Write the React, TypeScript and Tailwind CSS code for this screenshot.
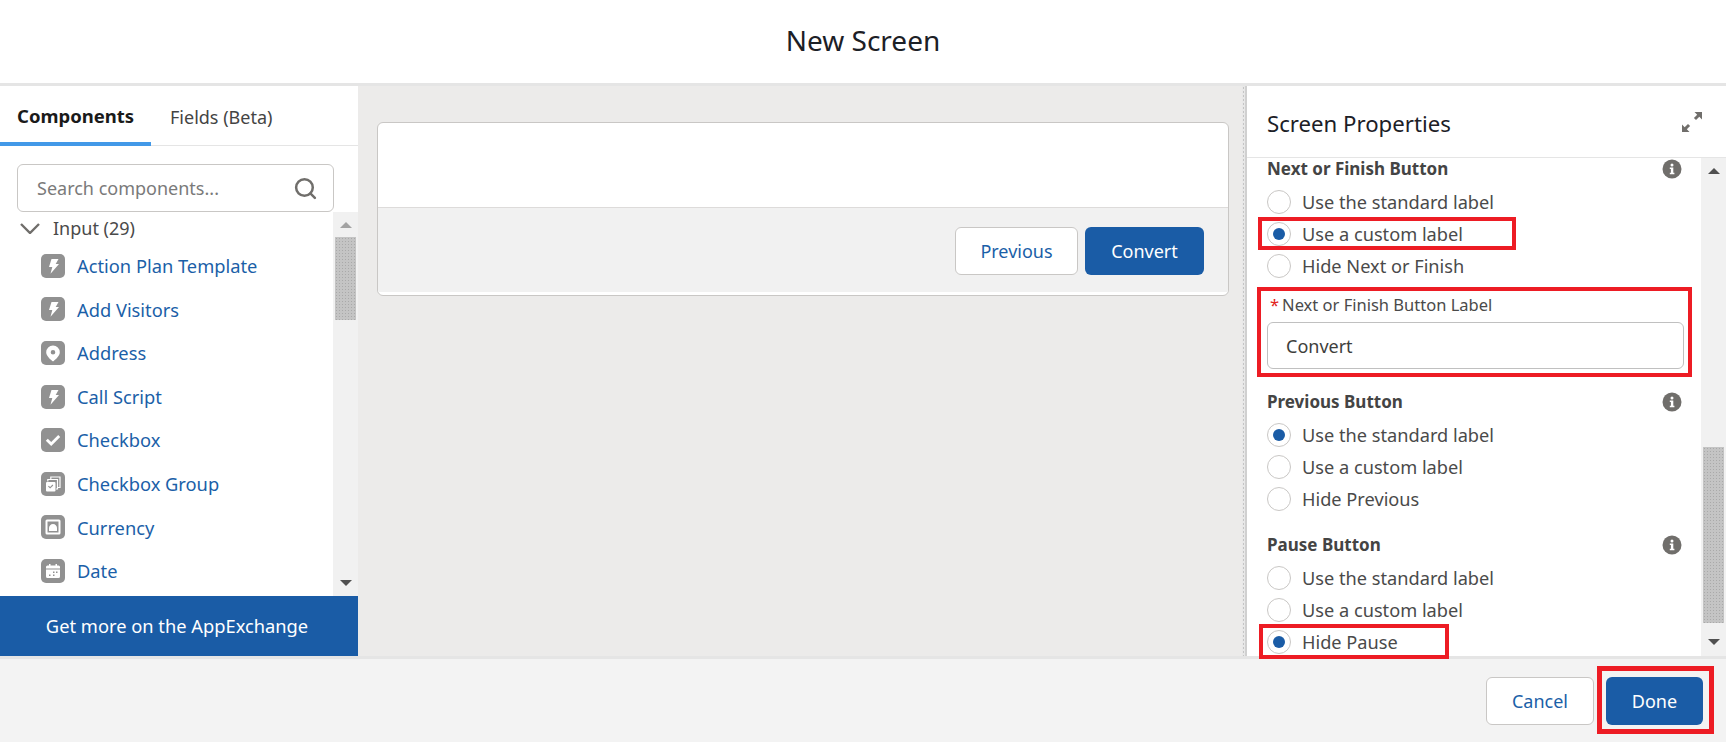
import { Search } from 'lucide-react'

const font = 'font-["Noto_Sans",sans-serif]'

const components = [
  { name: 'Action Plan Template', icon: 'bolt' },
  { name: 'Add Visitors', icon: 'bolt' },
  { name: 'Address', icon: 'pin' },
  { name: 'Call Script', icon: 'bolt' },
  { name: 'Checkbox', icon: 'check' },
  { name: 'Checkbox Group', icon: 'group' },
  { name: 'Currency', icon: 'currency' },
  { name: 'Date', icon: 'date' },
]

function ComponentIcon({ kind }: { kind: string }) {
  return (
    <span className="w-6 h-6 rounded-[5px] bg-[#919191] shrink-0 flex items-center justify-center">
      <svg viewBox="0 0 24 24" className="w-6 h-6" fill="#fff">
        {kind === 'bolt' && <path d="M10.500 5h7l-2.800 5h3.300L9.500 19.800l1.800-6.800H8z" />}
        {kind === 'pin' && (
          <path
            fillRule="evenodd"
            d="M12 4.500a6.800 6.800 0 0 0-6.800 6.800c0 3.800 4.600 7.500 6 8.600a1.300 1.300 0 0 0 1.600 0c1.400-1.100 6-4.800 6-8.600A6.800 6.800 0 0 0 12 4.500zm0 9a2.300 2.300 0 1 1 0-4.600 2.300 2.300 0 0 1 0 4.600z"
          />
        )}
        {kind === 'check' && <path d="M4.800 12.700l2-2 3.400 3.400 7-7 2 2-9 9z" />}
        {kind === 'group' && (
          <>
            <path fill="none" stroke="#fff" strokeWidth="1.200" d="M9.800 7V5h9.200v10.500h-2" />
            <path fill="none" stroke="#fff" strokeWidth="1.200" d="M6.800 9.500V7.500h9.700v9.500H15" />
            <rect x="5" y="10" width="9.500" height="9.500" rx="1" />
            <path d="M7 14.500l.8-.8 1.300 1.300 2.400-2.400.8.8-3.200 3.200z" fill="#919191" />
          </>
        )}
        {kind === 'currency' && (
          <>
            <path
              fillRule="evenodd"
              d="M4.500 6A1.500 1.500 0 0 1 6 4.500h12A1.500 1.500 0 0 1 19.500 6v12a1.500 1.500 0 0 1-1.500 1.500H6A1.500 1.500 0 0 1 4.500 18zm2 .5v11h11v-11z"
            />
            <path d="M8 16v-3c0-2.200 1.800-4 4-4s4 1.800 4 4v3z" />
          </>
        )}
        {kind === 'date' && (
          <>
            <path d="M8 5h1.500v1.500h5V5H16v1.500h1.500A1.500 1.500 0 0 1 19 8v1.500H5V8a1.500 1.500 0 0 1 1.500-1.500H8z" />
            <path
              fillRule="evenodd"
              d="M5 10.500h14v7a1.500 1.500 0 0 1-1.500 1.500h-11A1.500 1.500 0 0 1 5 17.500zm7 2v1.500h1.500v-1.500zm3 0v1.500h1.500v-1.500zm-7 3v1.500h1.500v-1.500zm4 0v1.500h1.500v-1.500z"
            />
          </>
        )}
      </svg>
    </span>
  )
}

function InfoIcon() {
  return (
    <svg viewBox="0 0 20 20" className="w-5 h-5 shrink-0">
      <circle cx="10" cy="10" r="9.500" fill="#706e6b" />
      <circle cx="10" cy="6" r="1.500" fill="#fff" />
      <path d="M7.800 8.600h3.500v5.200h1.100v1.400H7.800v-1.400h1.100V10H7.800z" fill="#fff" />
    </svg>
  )
}

function ExpandIcon() {
  return (
    <svg viewBox="0 0 20 20" className="w-5 h-5">
      <path
        fill="#706e6b"
        d="M12.500 0H20v7.500l-2.700-2.700-3.300 3.300-2.100-2.100 3.300-3.300zM0 12.500V20h7.500l-2.700-2.700 3.300-3.300-2.100-2.100-3.300 3.300z"
      />
    </svg>
  )
}

function Scrollbar({ before, thumb, after, upColor }: { before: string; thumb: string; after: string; upColor: string }) {
  return (
    <div className="bg-[#f1f1f1] flex flex-col items-center shrink-0 w-[25px]">
      <div className={`${before} w-full flex justify-center pt-[10px]`}>
        <svg viewBox="0 0 12 6" className="w-3 h-[6px]">
          <path d="M6 0l6 6H0z" fill={upColor} />
        </svg>
      </div>
      <div
        className={`${thumb} w-[21px] bg-[#c4c4c4] bg-[radial-gradient(#a9a9a9_0.6px,transparent_0.6px)] bg-[length:3px_3px]`}
      />
      <div className={`${after} w-full flex justify-center`}>
        <svg viewBox="0 0 12 6" className="w-3 h-[6px]">
          <path d="M6 6l6-6H0z" fill="#505050" />
        </svg>
      </div>
    </div>
  )
}

function RedBox({ className }: { className: string }) {
  return <div className={`absolute border-[#ed1c24] pointer-events-none ${className}`} />
}

function Radio({ label, checked, children }: { label: string; checked?: boolean; children?: React.ReactNode }) {
  return (
    <div className="relative h-8 flex items-center gap-[11px]">
      <span className="w-6 h-6 rounded-full border border-[#c9c7c5] bg-white flex items-center justify-center shrink-0">
        {checked && <span className="w-3 h-3 rounded-full bg-[#1a5ca6]" />}
      </span>
      <span className="text-[18.2px] text-[#4a4a4a] pt-px">{label}</span>
      {children}
    </div>
  )
}

function SectionHeading({ title }: { title: string }) {
  return (
    <div className="flex items-center justify-between h-5 pr-[2px]">
      <span className="text-[17px] font-bold text-[#444]">{title}</span>
      <InfoIcon />
    </div>
  )
}

export default function App() {
  return (
    <div className={`${font} w-[1726px] h-[742px] flex flex-col bg-white overflow-hidden`}>
      <header className="h-[86px] shrink-0 border-b-[3px] border-[#e5e5e5] flex items-center justify-center pb-1">
        <h1 className="text-[28px] text-[#1c2026]">New Screen</h1>
      </header>

      <div className="h-[570px] flex shrink-0">
        <aside className="w-[358px] shrink-0 flex flex-col bg-white">
          <div className="h-[60px] shrink-0 flex border-b border-[#e5e5e5]">
            <div className="w-[151px] -mb-px h-[60px] border-b-4 border-[#4299e8] flex items-center pl-[17px] pt-1">
              <span className="text-[18.5px] font-bold text-[#1a1a1a]">Components</span>
            </div>
            <div className="flex items-center pl-[19px] pt-1">
              <span className="text-[18px] text-[#444]">Fields (Beta)</span>
            </div>
          </div>

          <div className="h-[66px] shrink-0 pt-[18px] pl-[17px]">
            <div className="w-[317px] h-12 border border-[#c9c7c5] rounded-md flex items-center justify-between pl-[19px] pr-[15px]">
              <span className="text-[18px] text-[#7a7a7a]">Search components...</span>
              <Search className="w-[25px] h-[25px] text-[#706e6b]" strokeWidth={2.4} />
            </div>
          </div>

          <div className="h-[384px] shrink-0 flex">
            <div className="flex-1 overflow-hidden">
              <div className="h-8 flex items-center pl-5 gap-[13px]">
                <svg viewBox="0 0 20 11" className="w-5 h-[11px] shrink-0">
                  <path d="M1 1l9 9 9-9" fill="none" stroke="#706e6b" strokeWidth="2.400" />
                </svg>
                <span className="text-[18px] text-[#4a4a4a]">Input (29)</span>
              </div>
              {components.map((c) => (
                <div key={c.name} className="h-[43.6px] flex items-center pl-[41px] gap-3">
                  <ComponentIcon kind={c.icon} />
                  <span className="text-[18.3px] text-[#1b5fa8]">{c.name}</span>
                </div>
              ))}
            </div>
            <Scrollbar before="h-[25px]" thumb="h-[83px]" after="flex-1 items-end pb-[10px]" upColor="#a3a3a3" />
          </div>

          <div className="h-[60px] shrink-0 bg-[#1a5ca6] flex items-center justify-center pr-1">
            <span className="text-[18.3px] text-white">Get more on the AppExchange</span>
          </div>
        </aside>

        <main className="flex-1 bg-[#ecebea] pt-9 pl-[19px] pr-[13px]">
          <div className="h-[174px] rounded-md border border-[#c9c7c5] overflow-hidden flex flex-col bg-white">
            <div className="h-[85px] shrink-0 border-b border-[#dddbda]" />
            <div className="flex-1 bg-[#f1f1f1] flex justify-end items-start pt-[19px] pr-6 gap-[7px] mb-[3px]">
              <button className="w-[123px] h-12 rounded-md border border-[#c9c7c5] bg-white text-[18px] text-[#1b5fa8]">
                Previous
              </button>
              <button className="w-[119px] h-12 rounded-md bg-[#1a5ca6] text-[18px] text-white">Convert</button>
            </div>
          </div>
        </main>

        <div className="w-[5px] shrink-0 bg-[#e8e8e8] bg-[radial-gradient(#c4c4c4_0.7px,transparent_0.7px)] bg-[length:3px_4px] border-r-2 border-[#d0d0d0]" />

        <aside className="w-[479px] shrink-0 flex flex-col bg-white">
          <div className="h-[72px] shrink-0 border-b border-[#e5e5e5] flex items-center justify-between pl-5 pr-6">
            <span className="text-[22.2px] text-[#1c2026] pt-1">Screen Properties</span>
            <ExpandIcon />
          </div>
          <div className="flex-1 flex min-h-0">
            <div className="flex-1 pl-5 pr-[17px] relative">
              <div className="pt-[1px]">
                <SectionHeading title="Next or Finish Button" />
                <div className="mt-[7px]">
                  <Radio label="Use the standard label" />
                  <Radio label="Use a custom label" checked>
                    <RedBox className="border-[4px] -left-[9px] top-[-1px] w-[258px] h-[33px]" />
                  </Radio>
                  <Radio label="Hide Next or Finish" />
                </div>
                <div className="relative mt-[5px]">
                  <RedBox className="border-[4px] -left-[10px] top-0 -right-[8px] h-[90px]" />
                  <div className="pt-[6px] text-[16.5px] text-[#4a4a4a] leading-[24px] pl-[3px]">
                    <span className="text-[#e2231a] mr-[3px]">*</span>Next or Finish Button Label
                  </div>
                  <div className="mt-[5px] h-[47px] w-[417px] rounded-md border border-[#c0c0c0] flex items-center pl-[18px] text-[18px] text-[#3e3e3c] pt-px">
                    Convert
                  </div>
                </div>
              </div>

              <div className="mt-[23px]">
                <SectionHeading title="Previous Button" />
              </div>
              <div className="mt-[7px]">
                <Radio label="Use the standard label" checked />
                <Radio label="Use a custom label" />
                <Radio label="Hide Previous" />
              </div>

              <div className="mt-[20px]">
                <SectionHeading title="Pause Button" />
              </div>
              <div className="mt-[7px]">
                <Radio label="Use the standard label" />
                <Radio label="Use a custom label" />
                <Radio label="Hide Pause" checked>
                  <RedBox className="border-[4px] -left-2 top-[-2px] w-[190px] h-[35px]" />
                </Radio>
              </div>
            </div>
            <Scrollbar before="h-[289px]" thumb="h-[176px]" after="flex-1 pt-[16px]" upColor="#505050" />
          </div>
        </aside>
      </div>

      <footer className="flex-1 bg-[#f3f3f3] border-t-[3px] border-[#e5e5e5] flex justify-end items-start pt-[18px] pr-[23px] gap-3">
        <button className="w-[108px] h-12 rounded-md border border-[#c9c7c5] bg-white text-[18px] text-[#1b5fa8]">
          Cancel
        </button>
        <div className="relative">
          <RedBox className="border-[5px] -left-[9px] -right-[11px] -top-[11px] -bottom-[9px]" />
          <button className="block w-[97px] h-12 rounded-md bg-[#1a5ca6] text-[18px] text-white">Done</button>
        </div>
      </footer>
    </div>
  )
}
